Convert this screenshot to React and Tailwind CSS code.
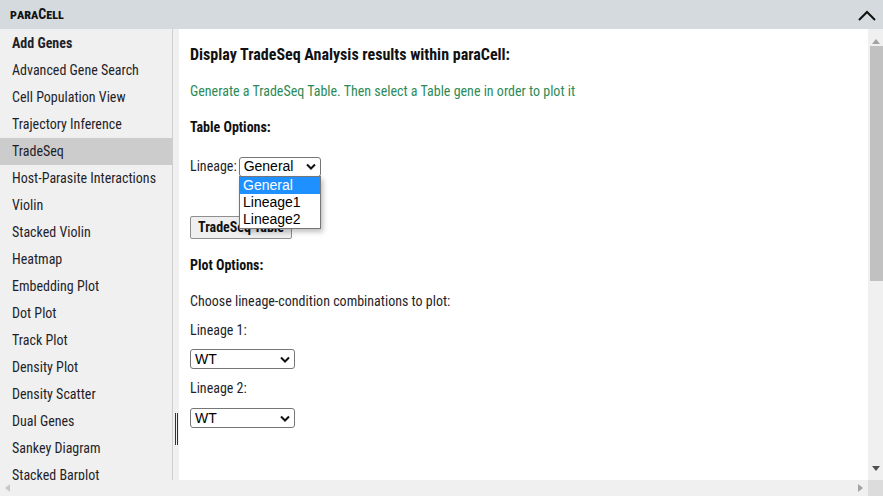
import { useState } from "react";

const MENU = [
  "Add Genes",
  "Advanced Gene Search",
  "Cell Population View",
  "Trajectory Inference",
  "TradeSeq",
  "Host-Parasite Interactions",
  "Violin",
  "Stacked Violin",
  "Heatmap",
  "Embedding Plot",
  "Dot Plot",
  "Track Plot",
  "Density Plot",
  "Density Scatter",
  "Dual Genes",
  "Sankey Diagram",
  "Stacked Barplot",
];

const FAKE_SELECT_CLS =
  "flex items-center justify-between rounded-[3px] border border-[#767676] bg-white pl-[4px] pr-[4px] font-['Liberation_Sans',Arial,sans-serif] text-[14px] text-black";

const Caret = () => (
  <svg width="10" height="7" viewBox="0 0 10 7">
    <path d="M1 1.5 L5 5.5 L9 1.5" fill="none" stroke="#111" strokeWidth="2" />
  </svg>
);

const FakeSelect = ({ value, width }) => (
  <div className={FAKE_SELECT_CLS} style={{ width, height: 20 }}>
    <span>{value}</span>
    <Caret />
  </div>
);

const Sidebar = ({ active }) => (
  <div className="w-[173px] shrink-0 overflow-hidden border-r border-[#cfcfcf] bg-[#f0f0f0] pt-[1px]">
    {MENU.map((item, i) => (
      <div
        key={item}
        className={`flex h-[27px] items-center whitespace-nowrap pl-[12px] text-[14px] text-[#1f1f2a] ${
          i === 0 ? "font-bold" : ""
        } ${item === active ? "bg-[#cccccc]" : ""}`}
      >
        {item}
      </div>
    ))}
  </div>
);

const VScrollbar = () => (
  <div className="flex w-[15px] shrink-0 flex-col bg-[#f0f0f0]">
    <div className="flex h-[17px] items-end justify-center pb-[2px]">
      <svg width="8" height="5" viewBox="0 0 8 5">
        <path d="M0 5 L4 0 L8 5 Z" fill="#a3a3a3" />
      </svg>
    </div>
    <div className="ml-[2px] h-[235px] bg-[#c1c1c1]" />
    <div className="flex-1" />
    <div className="flex h-[17px] items-start justify-center pt-[3px]">
      <svg width="8" height="5" viewBox="0 0 8 5">
        <path d="M0 0 L8 0 L4 5 Z" fill="#505050" />
      </svg>
    </div>
  </div>
);

export default function App() {
  const [active] = useState("TradeSeq");

  return (
    <div className="flex h-[496px] w-[883px] flex-col overflow-hidden bg-white font-['Roboto_Condensed','Liberation_Sans_Narrow','Roboto',sans-serif]">
      <div className="flex h-[29px] shrink-0 items-center justify-between bg-[#d4dadd] pl-[10px] pr-[6px]">
        <span className="text-[14px] font-bold text-[#111] [font-variant:small-caps]">
          paraCell
        </span>
        <svg width="20" height="12" viewBox="0 0 20 12">
          <path d="M2 11 L10 3 L18 11" fill="none" stroke="#111" strokeWidth="2" />
        </svg>
      </div>

      <div className="flex min-h-0 flex-1">
        <Sidebar active={active} />
        <div className="flex w-[6px] shrink-0 items-end justify-center gap-[1px] bg-[#f0f0f0] pb-[35px]">
          <div className="h-[32px] w-[1px] bg-[#333]" />
          <div className="h-[32px] w-[1px] bg-[#333]" />
        </div>

        <div className="relative min-w-0 flex-1 bg-white pl-[11px] pt-[17px] text-[14px] text-[#1f1f2a]">
          <h2 className="text-[16px] font-bold leading-[18px] text-[#111]">
            Display TradeSeq Analysis results within paraCell:
          </h2>
          <p className="mt-[19px] leading-[16px] text-[#2e8b57]">
            Generate a TradeSeq Table. Then select a Table gene in order to plot it
          </p>
          <p className="mt-[20px] font-bold leading-[16px] text-[#111]">Table Options:</p>

          <div className="mt-[21px] flex items-center gap-[2px]">
            <span>Lineage:</span>
            <FakeSelect value="General" width={82} />
          </div>

          <button className="mt-[39px] h-[23px] w-[102px] rounded-[2px] border border-[#8f8f8f] bg-[#efefef] pl-[7px] text-left text-[14px] font-bold text-[#111]">
            TradeSeq Table
          </button>

          <div className="absolute left-[60px] top-[147px] w-[82px] border border-[#767676] bg-white font-['Liberation_Sans',Arial,sans-serif] text-[14px] leading-[17px] text-black shadow-[2px_3px_5px_rgba(0,0,0,0.25)]">
            <div className="bg-[#1e90ff] px-[3px] text-white">General</div>
            <div className="px-[3px]">Lineage1</div>
            <div className="px-[3px]">Lineage2</div>
          </div>

          <p className="mt-[18px] font-bold leading-[16px] text-[#111]">Plot Options:</p>
          <p className="mt-[20px] leading-[16px]">
            Choose lineage-condition combinations to plot:
          </p>
          <p className="mt-[13px] leading-[16px]">Lineage 1:</p>
          <div className="mt-[11px]">
            <FakeSelect value="WT" width={105} />
          </div>
          <p className="mt-[11px] leading-[16px]">Lineage 2:</p>
          <div className="mt-[12px]">
            <FakeSelect value="WT" width={105} />
          </div>
        </div>

        <VScrollbar />
      </div>

      <div className="flex h-[16px] shrink-0">
        <div className="flex flex-1 items-center justify-between bg-[#f0f0f0] px-[5px]">
          <svg width="5" height="8" viewBox="0 0 5 8">
            <path d="M5 0 L0 4 L5 8 Z" fill="#c8c8c8" />
          </svg>
          <svg width="5" height="8" viewBox="0 0 5 8">
            <path d="M0 0 L5 4 L0 8 Z" fill="#a3a3a3" />
          </svg>
        </div>
        <div className="w-[15px] bg-[#dcdcdc]" />
      </div>
    </div>
  );
}
